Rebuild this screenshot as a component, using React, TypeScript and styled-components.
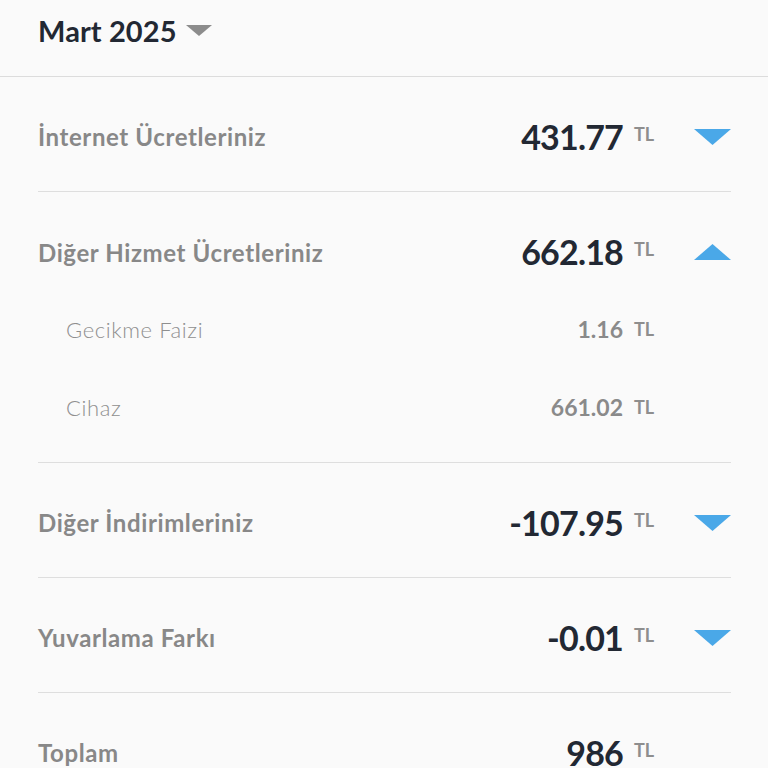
import React from 'react';
import styled, { createGlobalStyle } from 'styled-components';

const GlobalStyle = createGlobalStyle`
    html, body {
        margin: 0;
        padding: 0;
        background: #fafafa;
    }
    body {
        font-family: Lato, "Noto Sans", sans-serif;
        -webkit-font-smoothing: antialiased;
    }
`

const Page = styled.div`
    width: 768px;
    height: 768px;
    overflow: hidden;
    background: #fafafa;
`

const TopBar = styled.div`
    height: 77px;
    box-sizing: border-box;
    padding: 0 38px 16px;
    display: flex;
    align-items: center;
    gap: 9px;
    border-bottom: 1px solid #dcdcdc;
`

const MonthTitle = styled.div`
    font-size: 29px;
    font-weight: 700;
    color: #222833;
    letter-spacing: 0.1px;
`

const List = styled.div`
    padding: 0 37px 0 38px;
`

const Row = styled.div<{ $last?: boolean; $open?: boolean }>`
    border-bottom: ${p => p.$last ? 'none' : '1px solid #dedede'};
    padding-bottom: ${p => p.$open ? 16 : 0}px;
`

const RowHeader = styled.div<{ $open?: boolean }>`
    height: ${p => p.$open ? 98 : 114}px;
    box-sizing: border-box;
    padding-top: ${p => p.$open ? 22 : 5}px;
    display: flex;
    align-items: center;
`

const Label = styled.div`
    flex: 1;
    font-size: 24px;
    font-weight: 700;
    color: #888888;
    letter-spacing: 0.6px;
`

const AmountBox = styled.div`
    display: flex;
    align-items: flex-start;
    gap: 11px;
`

const Amount = styled.div<{ $sub?: boolean }>`
    font-size: ${p => p.$sub ? 23 : 34}px;
    font-weight: 700;
    color: ${p => p.$sub ? '#8a8a8a' : '#222833'};
    letter-spacing: ${p => p.$sub ? 0 : -0.8}px;
    line-height: 1;
`

const Currency = styled.span<{ $sub?: boolean }>`
    font-size: 18px;
    font-weight: 700;
    color: #8e8e8e;
    line-height: 1;
    margin-top: ${p => p.$sub ? 2 : 5}px;
    width: 21px;
`

const ToggleSlot = styled.div`
    width: 37px;
    margin-left: 39px;
    display: flex;
    justify-content: center;
`

const SubRow = styled.div`
    height: 78px;
    display: flex;
    align-items: center;
    padding-left: 28px;
    padding-right: 76px;
`

const SubLabel = styled.div`
    flex: 1;
    font-size: 22px;
    font-weight: 300;
    color: #8f8f8f;
    letter-spacing: 0.6px;
`

const Caret = ({ up, color, w, h }: { up?: boolean; color: string; w: number; h: number }) => (
    <svg width={w} height={h} viewBox={`0 0 ${w} ${h}`}>
        {up
            ? <polygon points={`0,${h} ${w},${h} ${w / 2},0`} fill={color} />
            : <polygon points={`0,0 ${w},0 ${w / 2},${h}`} fill={color} />}
    </svg>
)

type Item = {
    label: string
    amount: string
    open?: boolean
    toggle?: boolean
    children?: { label: string; amount: string }[]
}

const items: Item[] = [
    { label: 'İnternet Ücretleriniz', amount: '431.77', toggle: true },
    {
        label: 'Diğer Hizmet Ücretleriniz', amount: '662.18', toggle: true, open: true,
        children: [
            { label: 'Gecikme Faizi', amount: '1.16' },
            { label: 'Cihaz', amount: '661.02' },
        ],
    },
    { label: 'Diğer İndirimleriniz', amount: '-107.95', toggle: true },
    { label: 'Yuvarlama Farkı', amount: '-0.01', toggle: true },
    { label: 'Toplam', amount: '986' },
]

export default function App() {
    return <Page>
        <GlobalStyle />
        <TopBar>
            <MonthTitle>Mart 2025</MonthTitle>
            <Caret color="#8c8c8c" w={26} h={11} />
        </TopBar>
        <List>
            {items.map((item, i) => (
                <Row key={item.label} $last={i === items.length - 1} $open={item.open}>
                    <RowHeader $open={item.open}>
                        <Label>{item.label}</Label>
                        <AmountBox>
                            <Amount>{item.amount}</Amount>
                            <Currency>TL</Currency>
                        </AmountBox>
                        <ToggleSlot>
                            {item.toggle && <Caret up={item.open} color="#4aa8e8" w={37} h={16} />}
                        </ToggleSlot>
                    </RowHeader>
                    {item.open && item.children?.map(sub => (
                        <SubRow key={sub.label}>
                            <SubLabel>{sub.label}</SubLabel>
                            <AmountBox>
                                <Amount $sub>{sub.amount}</Amount>
                                <Currency $sub>TL</Currency>
                            </AmountBox>
                        </SubRow>
                    ))}
                </Row>
            ))}
        </List>
    </Page>
}
